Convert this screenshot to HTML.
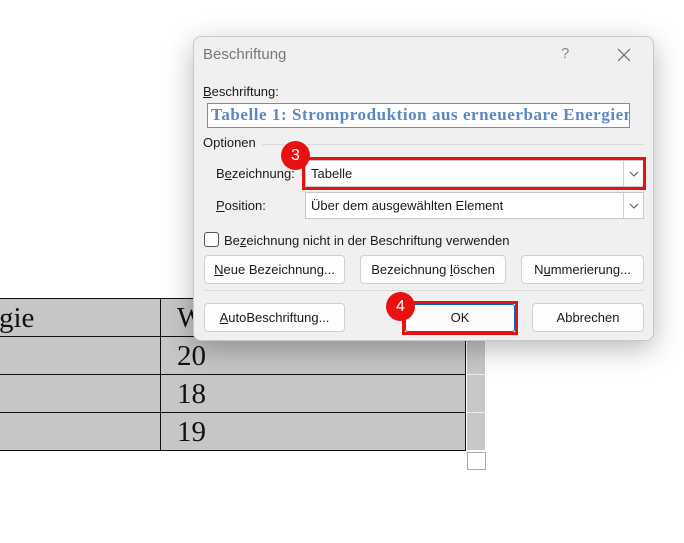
<!DOCTYPE html>
<html><head><meta charset="utf-8"><style>
*{margin:0;padding:0;box-sizing:border-box}
body{width:684px;height:543px;background:#fff;position:relative;overflow:hidden;font-family:"Segoe UI","Liberation Sans",sans-serif;font-size:13px;color:#1a1a1a}
.a{position:absolute}
.tbl{left:-2px;top:298px;width:468px;height:153px;background:#c6c6c6;border:1px solid #111}
.hl{position:absolute;left:0;right:0;height:1px;background:#111}
.vl{position:absolute;top:0;bottom:0;width:1px;background:#111;left:161px}
.serif{font-family:"Liberation Serif",serif;font-size:29px;color:#111}
.dlg{left:193px;top:36px;width:461px;height:305px;background:#f0f0f0;border:1px solid #c8c8c8;border-radius:8px;box-shadow:0 8px 28px rgba(0,0,0,.28)}
.btn{position:absolute;height:29px;background:#fdfdfd;border:1px solid #d0d0d0;border-radius:4px;text-align:center;line-height:27px;font-size:13px}
u{text-decoration:underline}
.badge{position:absolute;width:29px;height:29px;border-radius:50%;background:#e8110f;color:#fff;text-align:center;line-height:30px;font-size:16px;font-family:"Liberation Sans",sans-serif}
.combo{position:absolute;height:27px;background:#fff;border:1px solid #c8c8c8}
.arr{position:absolute;right:0;top:0;width:20px;height:25px;border-left:1px solid #d0d0d0}
</style></head><body>
<div class="a tbl">
 <div class="hl" style="top:37px"></div><div class="hl" style="top:75px"></div><div class="hl" style="top:113px"></div>
 <div class="vl"></div>
 <div class="a serif" style="left:0;top:3px">gie</div>
 <div class="a serif" style="left:178px;top:3px">W</div>
 <div class="a serif" style="left:178px;top:41px">20</div>
 <div class="a serif" style="left:178px;top:79px">18</div>
 <div class="a serif" style="left:178px;top:117px">19</div>
</div>
<div class="a" style="left:467px;top:336px;width:18px;height:114px;background:#c8c8c8;border-top:1px solid #eee"></div>
<div class="a" style="left:467px;top:374px;width:18px;height:1px;background:#eee"></div>
<div class="a" style="left:467px;top:412px;width:18px;height:1px;background:#eee"></div>
<div class="a" style="left:467px;top:452px;width:19px;height:18px;border:1px solid #aaa;background:#fff"></div>

<div class="a dlg">
 <div class="a" style="left:9px;top:9px;font-size:15px;color:#777">Beschriftung</div>
 <div class="a" style="left:367px;top:8px;font-size:15px;color:#888">?</div>
 <svg class="a" style="left:423px;top:11px" width="14" height="14"><path d="M1 1L13 13M13 1L1 13" stroke="#666" stroke-width="1.2"/></svg>
 <div class="a" style="left:9px;top:47px"><u>B</u>eschriftung:</div>
 <div class="a" style="left:13px;top:66px;width:423px;height:25px;background:#fff;border:1px solid #8a8a8a;overflow:hidden;white-space:nowrap;font-family:'Liberation Serif',serif;font-weight:bold;font-size:17px;letter-spacing:0.55px;color:#5b87c5;padding-left:3px;line-height:22px">Tabelle 1: Stromproduktion aus erneuerbare Energien</div>
 <div class="a" style="left:9px;top:98px">Optionen</div>
 <div class="a" style="left:68px;top:107px;width:382px;height:1px;background:#dadada"></div>
 <div class="a" style="left:22px;top:129px">B<u>e</u>zeichnung:</div>
 <div class="combo" style="left:111px;top:123px;width:339px"><span class="a" style="left:5px;top:5px">Tabelle</span><div class="arr"><svg width="20" height="25"><path d="M6 11l4 4 4-4" fill="none" stroke="#555"/></svg></div></div>
 <div class="a" style="left:108px;top:120px;width:344px;height:33px;border:3px solid #e8110f"></div>
 <div class="badge" style="left:87px;top:104px">3</div>
 <div class="a" style="left:22px;top:161px"><u>P</u>osition:</div>
 <div class="combo" style="left:111px;top:155px;width:339px"><span class="a" style="left:5px;top:5px">Über dem ausgewählten Element</span><div class="arr"><svg width="20" height="25"><path d="M6 11l4 4 4-4" fill="none" stroke="#555"/></svg></div></div>
 <div class="a" style="left:10px;top:195px;width:15px;height:15px;border:1px solid #555;border-radius:3px;background:#fdfdfd"></div>
 <div class="a" style="left:30px;top:196px">Be<u>z</u>eichnung nicht in der Beschriftung verwenden</div>
 <div class="btn" style="left:10px;top:218px;width:141px"><u>N</u>eue Bezeichnung...</div>
 <div class="btn" style="left:166px;top:218px;width:146px">Bezeichnung <u>l</u>öschen</div>
 <div class="btn" style="left:327px;top:218px;width:123px">N<u>u</u>mmerierung...</div>
 <div class="a" style="left:10px;top:253px;width:440px;height:1px;background:#dadada"></div>
 <div class="btn" style="left:10px;top:266px;width:141px"><u>A</u>utoBeschriftung...</div>
 <div class="a" style="left:208px;top:264px;width:116px;height:34px;border:3px solid #e8110f"></div>
 <div class="btn" style="left:211px;top:267px;width:110px;height:28px;border:1px solid #0067c0;border-radius:3px;line-height:26px">OK</div>
 <div class="badge" style="left:192px;top:255px">4</div>
 <div class="btn" style="left:338px;top:266px;width:112px">Abbrechen</div>
</div>
</body></html>
